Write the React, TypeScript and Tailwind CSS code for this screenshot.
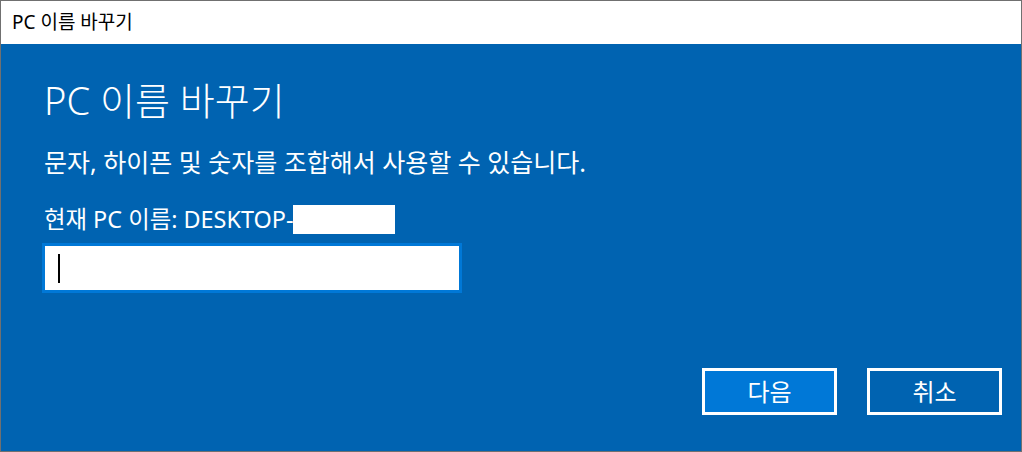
import React from "react";

export default function App() {
  const font = { fontFamily: '"Noto Sans", "Noto Sans CJK KR", sans-serif' };
  return (
    <div
      className="w-[1022px] h-[452px] border border-[#707070] flex flex-col bg-white"
      style={font}
    >
      <div className="h-[43px] bg-white flex items-center pl-[11px] text-[19px] text-black">
        PC 이름 바꾸기
      </div>
      <div className="flex-1 bg-[#0063B1] flex flex-col pl-[43px] pr-[19px] pb-[36px] text-white">
        <div className="mt-[35px] text-[38px] leading-[42px] font-light">PC 이름 바꾸기</div>
        <div className="mt-[26px] text-[25px] leading-[30px]">
          문자, 하이픈 및 숫자를 조합해서 사용할 수 있습니다.
        </div>
        <div className="mt-[28px] flex items-center text-[23.4px] leading-[29px]">
          <span>현재 PC 이름: DESKTOP-</span>
          <span className="inline-block w-[102px] h-[29px] bg-white"></span>
        </div>
        <div className="mt-[9px] ml-[-2px] w-[420px] h-[50px] border-[3px] border-[#0078D7] bg-white flex items-center pl-[13px]">
          <div className="w-[2px] h-[29px] bg-black"></div>
        </div>
        <div className="mt-auto flex justify-end gap-[30px]">
          <button className="w-[135px] h-[47px] border-[3px] border-white bg-[#0078D7] text-white text-[24px]">
            다음
          </button>
          <button className="w-[135px] h-[47px] border-[3px] border-white bg-[#0063B1] text-white text-[24px]">
            취소
          </button>
        </div>
      </div>
    </div>
  );
}
